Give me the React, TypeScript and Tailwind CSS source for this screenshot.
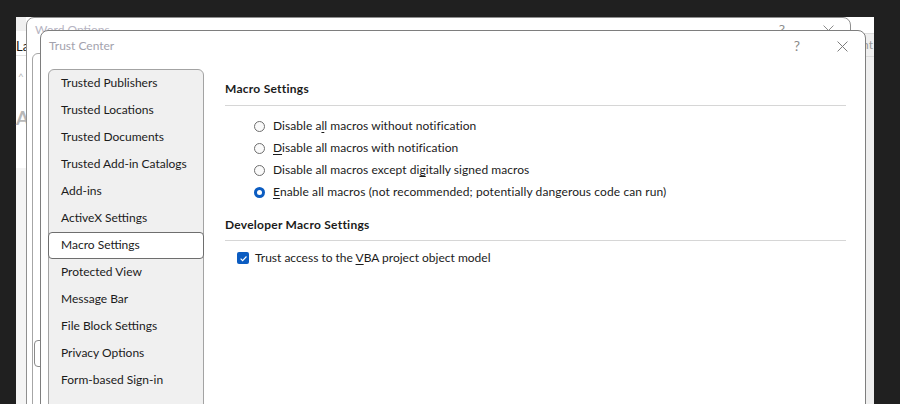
import React from "react";

function U({ children }: { children: React.ReactNode }) {
  return <span className="underline underline-offset-[2px] decoration-1">{children}</span>;
}

function Radio({ checked }: { checked?: boolean }) {
  if (checked) {
    return (
      <span className="w-[11px] h-[11px] rounded-full bg-[#0b5cc1] flex items-center justify-center shrink-0">
        <span className="w-[5px] h-[5px] rounded-full bg-white" />
      </span>
    );
  }
  return <span className="w-[11px] h-[11px] rounded-full border border-[#6e6e6e] bg-[#fafafa] shrink-0" />;
}

function CloseIcon({ size, color }: { size: number; color: string }) {
  return (
    <svg width={size} height={size} viewBox="0 0 10 10">
      <path d="M0.5 0.5 L9.5 9.5 M9.5 0.5 L0.5 9.5" stroke={color} strokeWidth="0.9" fill="none" />
    </svg>
  );
}

const navItems = [
  "Trusted Publishers",
  "Trusted Locations",
  "Trusted Documents",
  "Trusted Add-in Catalogs",
  "Add-ins",
  "ActiveX Settings",
  "Macro Settings",
  "Protected View",
  "Message Bar",
  "File Block Settings",
  "Privacy Options",
  "Form-based Sign-in",
];

export default function App() {
  return (
    <div className="relative w-[900px] h-[404px] overflow-hidden bg-[#202020] font-[Lato,sans-serif] text-[12px] text-[#1b1b1b]">
      {/* background application window */}
      <div className="absolute left-[16px] top-[17px] w-[858px] h-[387px] bg-white flex">
        <div className="w-[10px] flex flex-col">
          <div className="h-[14px] bg-[#f0f0f0]" />
          <div className="h-[24px] flex items-end pb-[2px] whitespace-nowrap leading-none text-[13px]">La</div>
          <div className="h-px bg-[#e3e3e3]" />
          <div className="h-[40px] flex items-center text-[#b5b5b5] text-[10px] pl-[2px]">^</div>
          <div className="h-[42px] flex items-center text-[#b8b8b8] text-[19px] font-bold leading-none">A</div>
          <div className="flex-1 bg-[#f4f4f4] mt-[30px]" />
        </div>
        <div className="flex-1" />
        <div className="w-[24px] flex flex-col">
          <div className="h-[16px]" />
          <div className="flex-1 bg-[#efefef] border-t border-[#dcdcdc] flex flex-col">
            <div className="h-[23px] flex items-center justify-end pr-px whitespace-nowrap text-[#9b9b9b] border-b border-[#dcdcdc]">
              nt
            </div>
          </div>
        </div>
      </div>

      {/* Word Options window */}
      <div className="absolute left-[26px] top-[17px] w-[825px] h-[400px] bg-white border border-[#8f8f8f] rounded-t-[8px] flex flex-col">
        <div className="h-[24px] flex items-center pl-[8px] pr-[16px] shrink-0">
          <span className="text-[#b6b4c2] whitespace-nowrap">Word Options</span>
          <span className="ml-auto text-[#8e8e8e] text-[14px] leading-none">?</span>
          <span className="ml-[38px] flex items-center">
            <CloseIcon size={11} color="#8a8a8a" />
          </span>
        </div>
        <div className="flex-1 pt-[11px] pl-[5px]">
          <div className="w-[300px] h-[400px] border border-[#a6a6a6] rounded-[6px] pt-[286px]">
            <div className="w-[30px] h-[27px] border border-[#8a8a8a] rounded-[4px] ml-px" />
          </div>
        </div>
      </div>

      {/* Trust Center window */}
      <div className="absolute left-[40px] top-[30px] w-[826px] h-[390px] bg-white border border-[#7e7e7e] rounded-t-[8px] flex flex-col">
        <div className="h-[30px] flex items-center pl-[8px] pr-[17px] shrink-0">
          <span className="text-[#a3a2ad] whitespace-nowrap">Trust Center</span>
          <span className="ml-auto text-[#8a8a8a] text-[14px] leading-none">?</span>
          <span className="ml-[37px] flex items-center">
            <CloseIcon size={11} color="#7a7a7a" />
          </span>
        </div>
        <div className="flex-1 flex gap-[21px] pt-[8px] pl-[7px] pr-[19px]">
          <div className="w-[156px] h-full bg-[#f0f0f0] border border-[#a3a3a3] rounded-[6px] flex flex-col shrink-0">
            {navItems.map((item) =>
              item === "Macro Settings" ? (
                <div
                  key={item}
                  className="h-[27px] mx-[-1px] flex items-center pl-[12px] pb-[2px] bg-white border border-[#6e6e6e] rounded-[4px] whitespace-nowrap"
                >
                  {item}
                </div>
              ) : (
                <div key={item} className="h-[27px] flex items-center pl-[12px] pb-[2px] whitespace-nowrap">
                  {item}
                </div>
              )
            )}
          </div>

          <div className="flex-1 flex flex-col pt-[10px]">
            <div className="h-[20px] leading-[20px] font-bold tracking-[0.25px]">Macro Settings</div>
            <div className="h-px bg-[#d6d6d6] mt-[6px]" />
            <div className="mt-[9px] pl-[29px] flex flex-col tracking-[0.05px]">
              <div className="h-[22px] flex items-center gap-[8px] whitespace-nowrap">
                <Radio />
                <span>
                  Disable a<U>l</U>l macros without notification
                </span>
              </div>
              <div className="h-[22px] flex items-center gap-[8px] whitespace-nowrap">
                <Radio />
                <span>
                  <U>D</U>isable all macros with notification
                </span>
              </div>
              <div className="h-[22px] flex items-center gap-[8px] whitespace-nowrap">
                <Radio />
                <span>
                  Disable all macros except di<U>g</U>itally signed macros
                </span>
              </div>
              <div className="h-[22px] flex items-center gap-[8px] whitespace-nowrap tracking-[0.1px]">
                <Radio checked />
                <span>
                  <U>E</U>nable all macros (not recommended; potentially dangerous code can run)
                </span>
              </div>
            </div>

            <div className="h-[20px] leading-[20px] font-bold mt-[12px] tracking-[0.25px]">Developer Macro Settings</div>
            <div className="h-px bg-[#d6d6d6] mt-[5px]" />
            <div className="mt-[6px] pl-[12px] h-[22px] flex items-center gap-[6px] whitespace-nowrap">
              <span className="w-[12px] h-[12px] rounded-[2px] bg-[#0b5cc1] flex items-center justify-center shrink-0">
                <svg width="9" height="9" viewBox="0 0 10 10">
                  <path d="M1.8 5.2 L4 7.3 L8.3 2.8" stroke="white" strokeWidth="1.3" fill="none" />
                </svg>
              </span>
              <span>
                Trust access to the <U>V</U>BA project object model
              </span>
            </div>
          </div>
        </div>
      </div>
    </div>
  );
}
